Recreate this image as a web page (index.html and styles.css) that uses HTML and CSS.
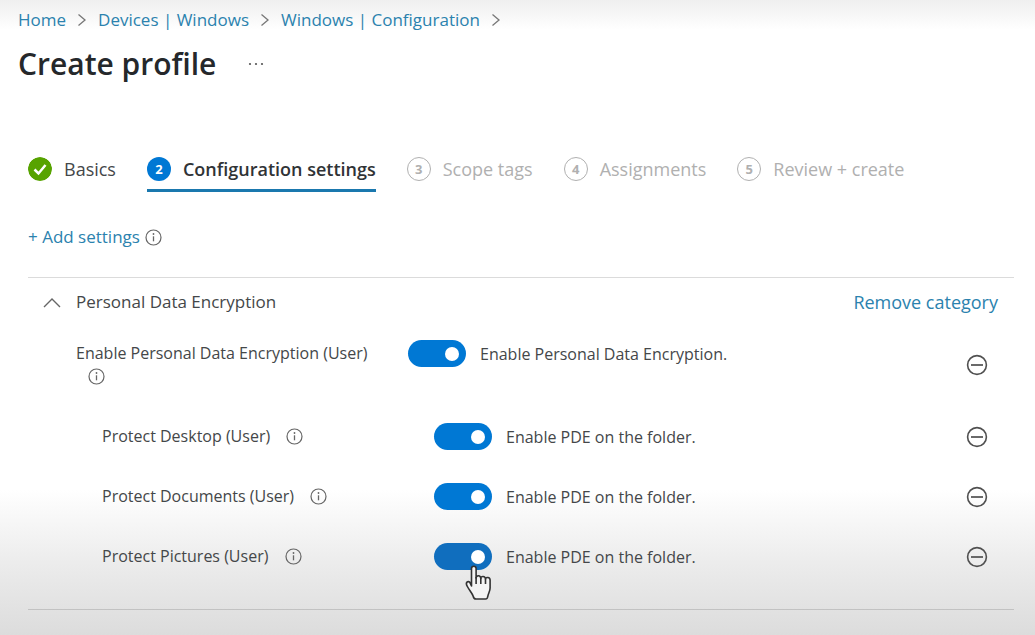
FILE: index.html
```html
<!DOCTYPE html>
<html lang="en">
<head>
<meta charset="utf-8">
<meta name="viewport" content="width=device-width, initial-scale=1">
<title>Create profile</title>
<link rel="stylesheet" href="styles.css">
</head>
<body>
<svg class="sprite" aria-hidden="true">
  <symbol id="chevron" viewBox="0 0 10 14"><path d="M1.500 1.500 8 7l-6.500 5.500" fill="none" stroke="currentColor" stroke-width="1.300"/></symbol>
  <symbol id="info" viewBox="0 0 17 17"><circle cx="8.500" cy="8.500" r="7.500" fill="none" stroke="currentColor" stroke-width="1.200"/><path d="M8.500 7.300v5" stroke="currentColor" stroke-width="1.300"/><circle cx="8.500" cy="5" r=".9" fill="currentColor"/></symbol>
  <symbol id="minus" viewBox="0 0 22 22"><circle cx="11" cy="11" r="9.400" fill="none" stroke="currentColor" stroke-width="1.600"/><path d="M5 11h12" stroke="currentColor" stroke-width="1.700"/></symbol>
</svg>
<div class="page">
  <nav class="breadcrumb" aria-label="Breadcrumb">
    <a href="#">Home</a><svg class="chevron"><use href="#chevron"/></svg>
    <a href="#">Devices | Windows</a><svg class="chevron"><use href="#chevron"/></svg>
    <a href="#">Windows | Configuration</a><svg class="chevron"><use href="#chevron"/></svg>
  </nav>
  <header class="heading">
    <h1>Create profile</h1>
    <button class="more" type="button" aria-label="More actions"><svg viewBox="0 0 16 4"><circle cx="2" cy="2" r="1.100"/><circle cx="8" cy="2" r="1.100"/><circle cx="14" cy="2" r="1.100"/></svg></button>
  </header>
  <main class="content">
    <nav class="steps" aria-label="Steps">
      <button class="step" type="button"><svg class="badge done" viewBox="0 0 24 24"><circle cx="12" cy="12" r="12"/><path d="m6.500 12.500 4 4 7-8.500"/></svg>Basics</button>
      <button class="step current" type="button" aria-current="step"><span class="badge">2</span>Configuration settings</button>
      <button class="step upcoming" type="button"><span class="badge">3</span>Scope tags</button>
      <button class="step upcoming" type="button"><span class="badge">4</span>Assignments</button>
      <button class="step upcoming" type="button"><span class="badge">5</span>Review + create</button>
    </nav>
    <div class="add"><a href="#">+ Add settings</a><svg class="info"><use href="#info"/></svg></div>
    <section class="category">
      <div class="category-head">
        <button class="collapse" type="button" aria-label="Collapse"><svg viewBox="0 0 18 11"><path d="M1 10 9 2l8 8"/></svg></button>
        <h2>Personal Data Encryption</h2>
        <a href="#">Remove category</a>
      </div>
      <div class="row">
        <div class="name">Enable Personal Data Encryption (User) <svg class="info"><use href="#info"/></svg></div>
        <label class="setting"><input class="toggle" type="checkbox" role="switch" checked>Enable Personal Data Encryption.</label>
        <button class="remove" type="button" aria-label="Remove"><svg><use href="#minus"/></svg></button>
      </div>
      <div class="row child">
        <div class="name">Protect Desktop (User) <svg class="info"><use href="#info"/></svg></div>
        <label class="setting"><input class="toggle" type="checkbox" role="switch" checked>Enable PDE on the folder.</label>
        <button class="remove" type="button" aria-label="Remove"><svg><use href="#minus"/></svg></button>
      </div>
      <div class="row child">
        <div class="name">Protect Documents (User) <svg class="info"><use href="#info"/></svg></div>
        <label class="setting"><input class="toggle" type="checkbox" role="switch" checked>Enable PDE on the folder.</label>
        <button class="remove" type="button" aria-label="Remove"><svg><use href="#minus"/></svg></button>
      </div>
      <div class="row child">
        <div class="name">Protect Pictures (User) <svg class="info"><use href="#info"/></svg></div>
        <label class="setting"><input class="toggle hovered" type="checkbox" role="switch" checked>Enable PDE on the folder.
          <svg class="pointer" viewBox="0 0 28 37"><path d="M7.500 22V4.500a2.300 2.300 0 0 1 4.600 0V14c0-3 4.600-3 4.700.4 0-2.700 4.500-2.600 4.700.6.300-2.200 4.500-2 4.600 1v8c0 3-1.600 5-2.100 7.500-.3 2.500-1 3.500-2.500 3.500H12c-1.800 0-2.500-1-2.900-3-1-3-4-6-6-10-2-3.500.8-5.500 2.600-3.800Z"/><path d="M12.100 13v7M16.800 14v6M21.500 15v5"/></svg>
        </label>
        <button class="remove" type="button" aria-label="Remove"><svg><use href="#minus"/></svg></button>
      </div>
    </section>
  </main>
</div>
</body>
</html>
```
FILE: styles.css
```css
* { box-sizing: border-box; }
body {
  margin: 0;
  color: #444749;
  font: 16px/24px "Open Sans", "Noto Sans", sans-serif;
}
.page {
  min-height: 100vh;
  padding: 8px 18px 24px;
  background:
    linear-gradient(#efefef, rgba(255, 255, 255, 0)) top / 100% 30px no-repeat,
    linear-gradient(rgba(255, 255, 255, 0), #ececec 50%, #dcdcdc) bottom / 100% 145px no-repeat,
    #fff;
}
.sprite { position: absolute; width: 0; height: 0; }
svg { display: block; flex: none; }
a { color: #2b82ae; text-decoration: none; }
button {
  padding: 0;
  border: 0;
  background: none;
  color: inherit;
  font: inherit;
  cursor: pointer;
}
.breadcrumb { display: flex; align-items: center; gap: 11px; font-size: 17px; }
.chevron { width: 10px; height: 14px; color: #777; }
.heading { display: flex; align-items: center; gap: 32px; margin-top: 12px; }
h1 { margin: 0; color: #25282b; font-size: 30px; line-height: 40px; font-weight: 600; }
.more svg { width: 16px; height: 4px; fill: #555; }
.content { padding: 73px 3px 0 10px; }
.steps { display: flex; gap: 31px; font-size: 18px; }
.step {
  display: flex;
  align-items: center;
  gap: 12px;
  padding: 0 0 8px;
  border-bottom: 3px solid transparent;
}
.badge {
  display: grid;
  place-items: center;
  width: 24px;
  height: 24px;
  border-radius: 50%;
  font-size: 13px;
  line-height: 20px;
  font-weight: 700;
}
.done { fill: #57a300; }
.done path { fill: none; stroke: #fff; stroke-width: 2.5; }
.current { border-color: #1a78ae; color: #303336; font-weight: 600; }
.current .badge { background: #0078d4; color: #fff; }
.upcoming { color: #b0b0b0; }
.upcoming .badge { border: 1px solid #b0b0b0; }
.add { display: flex; align-items: center; gap: 5px; margin-top: 33px; font-size: 17px; }
.info { width: 17px; height: 17px; color: #666; }
.category {
  margin-top: 28px;
  padding: 11px 0 39px;
  border: solid rgba(0, 0, 0, .14);
  border-width: 1px 0;
}
.category-head {
  display: flex;
  align-items: center;
  padding: 0 16px 0 15px;
  margin-bottom: 25px;
  font-size: 18px;
  line-height: 26px;
}
.collapse { width: 33px; }
.collapse svg { width: 18px; height: 11px; fill: none; stroke: #666; stroke-width: 1.4; }
h2 { flex: 1; margin: 0; font-size: 17px; font-weight: 400; }
.row {
  display: grid;
  grid-template-columns: 332px 1fr auto;
  align-items: start;
  padding: 0 26px 0 48px;
}
.row + .row { margin-top: 33px; }
.child { padding-left: 74px; }
.name { padding: 2px 30px 2px 0; line-height: 23px; }
.name .info { display: inline-block; margin-left: 12px; vertical-align: -3px; }
.setting { position: relative; display: flex; align-items: center; gap: 14px; }
.toggle {
  appearance: none;
  display: flex;
  align-items: center;
  width: 58px;
  height: 27px;
  margin: 0;
  padding-left: 37px;
  border-radius: 14px;
  background: #0078d4;
}
.toggle::before { content: ""; width: 14px; height: 14px; border-radius: 50%; background: #fff; }
.hovered { background: #106ebe; }
.pointer {
  position: absolute;
  top: 21px;
  left: 30px;
  width: 28px;
  height: 37px;
  fill: #f4f4f4;
  stroke: #333;
  stroke-width: 1.6;
  stroke-linejoin: round;
}
.remove { align-self: center; color: #505050; }
.remove svg { width: 22px; height: 22px; }
```
